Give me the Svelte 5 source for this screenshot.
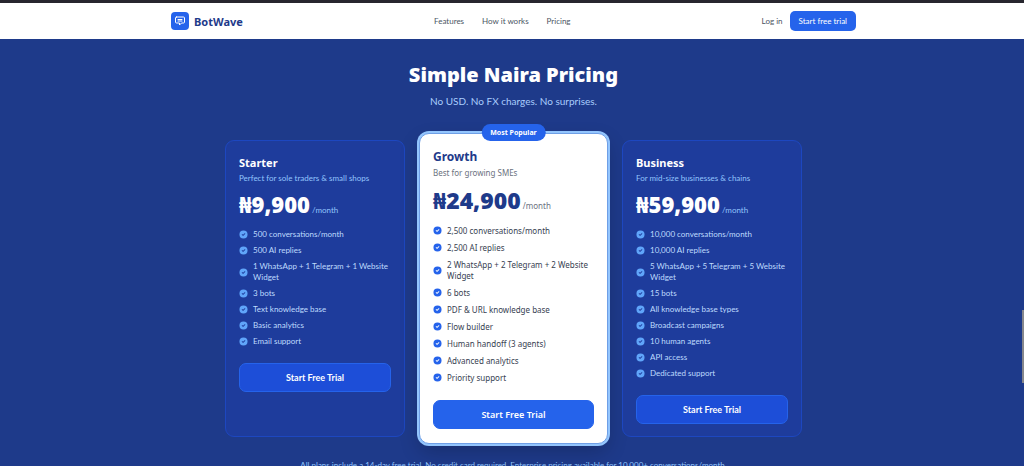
<script lang="ts">
  type Plan = { name: string; blurb: string; price: string; features: string[]; popular?: boolean };

  const links = ['Features', 'How it works', 'Pricing'];

  const plans: Plan[] = [
    {
      name: 'Starter',
      blurb: 'Perfect for sole traders & small shops',
      price: '₦9,900',
      features: [
        '500 conversations/month',
        '500 AI replies',
        '1 WhatsApp + 1 Telegram + 1 Website Widget',
        '3 bots',
        'Text knowledge base',
        'Basic analytics',
        'Email support',
      ],
    },
    {
      name: 'Growth',
      blurb: 'Best for growing SMEs',
      price: '₦24,900',
      popular: true,
      features: [
        '2,500 conversations/month',
        '2,500 AI replies',
        '2 WhatsApp + 2 Telegram + 2 Website Widget',
        '6 bots',
        'PDF & URL knowledge base',
        'Flow builder',
        'Human handoff (3 agents)',
        'Advanced analytics',
        'Priority support',
      ],
    },
    {
      name: 'Business',
      blurb: 'For mid-size businesses & chains',
      price: '₦59,900',
      features: [
        '10,000 conversations/month',
        '10,000 AI replies',
        '5 WhatsApp + 5 Telegram + 5 Website Widget',
        '15 bots',
        'All knowledge base types',
        'Broadcast campaigns',
        '10 human agents',
        'API access',
        'Dedicated support',
      ],
    },
  ];
</script>

<header>
  <div class="bar">
    <a class="brand" href="#top">
      <span class="logo">
        <svg viewBox="0 0 24 24" aria-hidden="true">
          <path d="M8 9h8M8 12h8M5 4h14a2 2 0 012 2v8a2 2 0 01-2 2h-4l-4 4v-4H5a2 2 0 01-2-2V6a2 2 0 012-2z" />
        </svg>
      </span>
      BotWave
    </a>
    <nav>
      {#each links as link}
        <a href="#{link}">{link}</a>
      {/each}
    </nav>
    <div class="account">
      <a href="#login">Log in</a>
      <button class="trial">Start free trial</button>
    </div>
  </div>
</header>

<main>
  <h1>Simple Naira Pricing</h1>
  <p class="sub">No USD. No FX charges. No surprises.</p>

  <div class="plans">
    {#each plans as plan}
      <article class="plan" class:popular={plan.popular}>
        {#if plan.popular}
          <span class="badge">Most Popular</span>
        {/if}
        <h2>{plan.name}</h2>
        <p class="blurb">{plan.blurb}</p>
        <p class="price"><strong>{plan.price}</strong> <span>/month</span></p>
        <ul>
          {#each plan.features as feature}
            <li>
              <svg viewBox="0 0 20 20" aria-hidden="true">
                <path fill-rule="evenodd" d="M10 19a9 9 0 100-18 9 9 0 000 18zm3.707-10.293a1 1 0 00-1.414-1.414L9 10.586 7.707 9.293a1 1 0 00-1.414 1.414l2 2a1 1 0 001.414 0l4-4z" />
              </svg>
              <span>{feature}</span>
            </li>
          {/each}
        </ul>
        <button class="choose">Start Free Trial</button>
      </article>
    {/each}
  </div>

  <p class="note">All plans include a 14-day free trial. No credit card required. Enterprise pricing available for 10,000+ conversations/month.</p>
</main>

<div class="thumb"></div>

<style>
  :global(html) { scrollbar-width: none; }
  :global(body) { margin: 0; background: #1e3a8a; font-family: Lato, "Noto Sans", sans-serif; }
  h1, h2, p, ul { margin: 0; padding: 0; }
  a { color: inherit; text-decoration: none; }
  button { font: inherit; cursor: pointer; box-sizing: border-box; }
  h1, h2, .brand, .price strong, .badge { font-family: "Noto Sans", sans-serif; }

  header { background: #fff; border-top: 3px solid #27262e; padding-left: 3px; }
  .bar { max-width: 685px; height: 36px; margin: 0 auto; display: grid; grid-template-columns: 263px 1fr auto; align-items: center; font-size: 8px; color: #4b5563; }
  .brand { display: flex; align-items: center; gap: 5px; font-size: 11px; font-weight: 700; color: #1e3a8a; }
  .logo { width: 18px; height: 18px; border-radius: 4px; background: #2563eb; display: flex; align-items: center; justify-content: center; }
  .logo svg { width: 12px; height: 12px; fill: none; stroke: #fff; stroke-width: 2; stroke-linecap: round; stroke-linejoin: round; }
  nav { display: flex; gap: 18px; }
  .account { display: flex; align-items: center; justify-content: flex-end; gap: 7px; }
  .trial { height: 20px; padding: 0 9px; border: 0; border-radius: 5px; background: #2563eb; color: #fff; }

  main { padding: 22px 0 24px 3px; text-align: center; color: #fff; }
  h1 { font-size: 20px; line-height: 28px; font-weight: 900; }
  .sub { margin-top: 4px; font-size: 10px; line-height: 16px; color: #a9cdfd; }

  .plans { max-width: 577px; margin: 24px auto 0; display: grid; grid-template-columns: 180fr 189fr 180fr; gap: 14px; align-items: center; text-align: left; }
  .plan { position: relative; box-sizing: border-box; height: 297px; padding: 14px 13px; border: 1px solid #1d47c0; border-radius: 9px; background: #1e3c9c; }
  h2 { font-size: 11px; line-height: 16px; font-weight: 700; }
  .blurb { font-size: 8px; line-height: 14px; color: #93c5fd; }
  .price { margin-top: 3px; line-height: 32px; font-size: 8px; color: #93c5fd; white-space: nowrap; }
  .price strong { font-size: 22px; font-weight: 900; color: #fff; }
  ul { margin-top: 3px; list-style: none; display: flex; flex-direction: column; gap: 5px; }
  li { display: flex; align-items: center; gap: 5px; font-size: 8px; line-height: 11px; color: #bfdbfe; }
  li svg { flex: none; width: 9px; height: 9px; fill: #60a5fa; }
  .choose { width: 100%; height: 29px; margin-top: 16px; border: 1px solid #2563eb; border-radius: 7px; background: #1d4ed8; color: #fff; font-size: 9px; font-weight: 700; }

  .popular { height: 311px; padding: 15px 13px; border: 1px solid #6f9fe6; border-radius: 10px; background: #fff; box-shadow: 0 0 0 2px #93c5fd, 0 8px 20px #0003; font-family: "Noto Sans", sans-serif; }
  .popular h2 { color: #1e3a8a; font-size: 12px; }
  .popular .blurb, .popular .price { color: #6b7280; }
  .popular .blurb { line-height: 16px; }
  .popular .price strong { color: #1e3a8a; font-size: 23px; }
  .popular ul { gap: 6px; }
  .popular li { color: #374151; }
  .popular li svg { fill: #2563eb; }
  .popular .choose { margin-top: 17px; background: #2563eb; font-weight: 600; }
  .badge { position: absolute; top: -10px; left: 50%; transform: translateX(-50%); padding: 0 9px; border-radius: 9px; background: #2563eb; color: #fff; font-size: 7px; line-height: 17px; font-weight: 700; white-space: nowrap; }

  .note { margin-top: 15px; font-size: 8px; line-height: 12px; color: #93c5fd; }
  .thumb { position: fixed; right: 0; top: 310px; width: 2px; height: 73px; background: #85868c; }
</style>
